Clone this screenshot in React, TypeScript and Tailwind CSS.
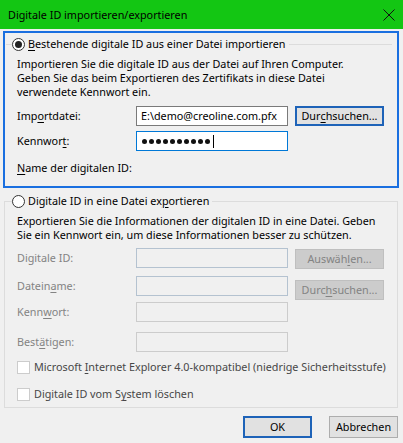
import React from "react";

function U({ children }: { children: React.ReactNode }) {
  return <span className="underline decoration-1 underline-offset-[2px]">{children}</span>;
}

function Radio({ checked }: { checked?: boolean }) {
  return (
    <span className="flex h-[13px] w-[13px] shrink-0 items-center justify-center rounded-full border border-[#333] bg-white">
      {checked && <span className="h-[7px] w-[7px] rounded-full bg-[#222]" />}
    </span>
  );
}

function Check({ label }: { label: React.ReactNode }) {
  return (
    <div className="flex items-center gap-[4px] text-[#474747]">
      <span className="h-[13px] w-[13px] shrink-0 border border-[#cccccc] bg-white" />
      <span>{label}</span>
    </div>
  );
}

function Btn({ children, disabled, focused, w = "w-[89px]" }: { children: React.ReactNode; disabled?: boolean; focused?: boolean; w?: string }) {
  const tone = disabled
    ? "bg-[#cccccc] border border-[#bfbfbf] text-[#838383]"
    : focused
      ? "bg-[#e1e1e1] border-2 border-[#1e63b8] text-black"
      : "bg-[#e1e1e1] border border-[#adadad] text-black";
  return <div className={`${w} flex shrink-0 items-center justify-center ${tone}`}>{children}</div>;
}

export default function App() {
  return (
    <div className="flex h-[443px] w-[403px] flex-col bg-[#f0f0f0] font-['Noto_Sans',sans-serif] text-[10.8px] leading-[14px] text-black">
      {/* title bar */}
      <div className="flex h-[29px] shrink-0 items-center justify-between bg-[#13c613] pl-[8px] pr-[8px]">
        <span>Digitale ID importieren/exportieren</span>
        <svg width="12" height="12" viewBox="0 0 12 12" className="text-[#111]">
          <path d="M0.5 0.5 L11.5 11.5 M11.5 0.5 L0.5 11.5" stroke="currentColor" strokeWidth="1" />
        </svg>
      </div>

      {/* import group, focused */}
      <div className="ml-[3px] mt-[2px] h-[157px] w-[396px] shrink-0 border-2 border-[#1a6fe0]">
        <fieldset className="ml-[1px] mr-[5px] mt-[3px] border-t border-[#dcdcdc]">
          <legend className="ml-[6px] flex h-[16px] items-center gap-[3px] pr-[3px]">
            <Radio checked />
            <span>
              <U>B</U>estehende digitale ID aus einer Datei importieren
            </span>
          </legend>
          <div className="pl-[11px] pt-[5px]">
            <p>
              Importieren Sie die digitale ID aus der Datei auf Ihren Computer.
              <br />
              Geben Sie das beim Exportieren des Zertifikats in diese Datei
              <br />
              verwendete Kennwort ein.
            </p>
            <div className="mt-[7px] flex items-start">
              <span className="mt-[3px] w-[119px]">
                Imp<U>o</U>rtdatei:
              </span>
              <div className="flex h-[20px] w-[152px] items-center border border-[#7a7a7a] bg-white pl-[4px]">E:\demo@creoline.com.pfx</div>
              <div className="ml-[7px] flex h-[20px]">
                <Btn focused>
                  Dur<U>c</U>hsuchen...
                </Btn>
              </div>
            </div>
            <div className="mt-[5px] flex items-start">
              <span className="mt-[3px] w-[119px]">
                Kennwor<U>t</U>:
              </span>
              <div className="flex h-[20px] w-[152px] items-center gap-[2px] border border-[#0078d7] bg-white pl-[5px]">
                {[0, 1, 2, 3, 4, 5, 6, 7, 8, 9].map((i) => (
                  <span key={i} className="h-[5px] w-[5px] rounded-full bg-[#111]" />
                ))}
                <span className="ml-[1px] h-[13px] w-px bg-black" />
              </div>
            </div>
            <p className="mt-[10px]">
              <U>N</U>ame der digitalen ID:
            </p>
          </div>
        </fieldset>
      </div>

      {/* export group */}
      <fieldset className="ml-[4px] mt-[5px] w-[394px] shrink-0 border border-[#dcdcdc] pb-[6px] pl-[12px]">
        <legend className="-ml-[5px] flex h-[16px] items-center gap-[3px] pr-[3px]">
          <Radio />
          <span>
            Digitale ID in eine Datei ex<U>p</U>ortieren
          </span>
        </legend>
        <div className="pt-[5px]">
          <p>
            Exportieren Sie die Informationen der digitalen ID in eine Datei. Geben
            <br />
            Sie ein Kennwort ein, um diese Informationen besser zu schützen.
          </p>
          <div className="mt-[6px] flex items-start text-[#838383]">
            <span className="mt-[3px] w-[119px]">Digitale ID:</span>
            <div className="h-[20px] w-[152px] border border-[#b4c2d0] bg-[#f0f0f0]" />
            <div className="ml-[7px] mt-[1px] flex h-[20px]">
              <Btn disabled>
                Auswäh<U>l</U>en...
              </Btn>
            </div>
          </div>
          <div className="mt-[7px] flex items-start text-[#838383]">
            <span className="mt-[3px] w-[119px]">
              Datein<U>a</U>me:
            </span>
            <div className="h-[20px] w-[152px] border border-[#b4c2d0] bg-[#f0f0f0]" />
            <div className="ml-[7px] mt-[4px] flex h-[20px]">
              <Btn disabled>
                Durc<U>h</U>suchen...
              </Btn>
            </div>
          </div>
          <div className="mt-[2px] flex items-start text-[#838383]">
            <span className="mt-[3px] w-[119px]">
              Kenn<U>w</U>ort:
            </span>
            <div className="h-[20px] w-[152px] border border-[#cccccc] bg-[#f0f0f0]" />
          </div>
          <div className="mt-[10px] flex items-start text-[#838383]">
            <span className="mt-[3px] w-[119px]">
              Best<U>ä</U>tigen:
            </span>
            <div className="h-[20px] w-[152px] border border-[#cccccc] bg-[#f0f0f0]" />
          </div>
          <div className="mt-[8px]">
            <Check
              label={
                <>
                  Microsoft <U>I</U>nternet Explorer 4.0-kompatibel (niedrige Sicherheitsstufe)
                </>
              }
            />
          </div>
          <div className="mt-[13px]">
            <Check
              label={
                <>
                  Digitale ID vom S<U>y</U>stem löschen
                </>
              }
            />
          </div>
        </div>
      </fieldset>

      {/* dialog buttons */}
      <div className="mt-[8px] flex h-[22px] justify-end gap-[17px] pr-[5px]">
        <Btn focused w="w-[69px]">
          OK
        </Btn>
        <Btn w="w-[69px]">Abbrechen</Btn>
      </div>
    </div>
  );
}
